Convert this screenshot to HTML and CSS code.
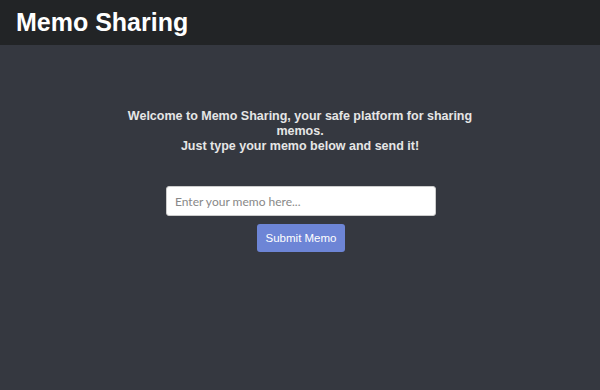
FILE: index.html
```html
<!DOCTYPE html>
<html lang="en">
<head>
  <meta charset="UTF-8">
  <title>Memo Sharing</title>
  <link rel="stylesheet" href="styles.css">
</head>
<body>
  <header class="topbar">
    <h1>Memo Sharing</h1>
  </header>

  <main class="content">
    <p class="intro">
      Welcome to Memo Sharing, your safe platform for sharing memos.<br>
      Just type your memo below and send it!
    </p>
    <form class="memo-form" onsubmit="return false">
      <input type="text" class="memo-input" placeholder="Enter your memo here...">
      <button type="submit" class="memo-btn">Submit Memo</button>
    </form>
  </main>
</body>
</html>
```

FILE: styles.css
```css
body {
  margin: 0;
  background: #353840;
  font-family: 'Liberation Sans', Arial, sans-serif;
  min-height: 100vh;
}
.topbar {
  background: #222426;
  height: 45px;
  padding: 0 16px;
  display: flex;
  align-items: center;
}
.topbar h1 {
  margin: 0;
  color: #fff;
  font-size: 25px;
  font-weight: bold;
}
.content {
  display: flex;
  flex-direction: column;
  align-items: center;
  padding-top: 64px;
}
.intro {
  margin: 0;
  width: 360px;
  text-align: center;
  color: #e6e6e6;
  font-size: 12.5px;
  font-weight: bold;
  line-height: 15px;
}
.memo-form {
  display: flex;
  flex-direction: column;
  align-items: center;
  gap: 8px;
  margin-top: 32px;
  padding-left: 2px;
}
.memo-input {
  box-sizing: border-box;
  width: 270px;
  height: 30px;
  padding: 0 8px;
  border: 1px solid #ccc;
  border-radius: 3px;
  background: #fff;
  font-family: Lato, sans-serif;
  font-size: 12px;
  color: #333;
}
.memo-input::placeholder { color: #888; }
.memo-btn {
  width: 88px;
  height: 28px;
  border: none;
  border-radius: 3px;
  background: #6d85d6;
  color: #fff;
  font-family: 'Liberation Sans', Arial, sans-serif;
  font-size: 11.5px;
  cursor: pointer;
}
```
